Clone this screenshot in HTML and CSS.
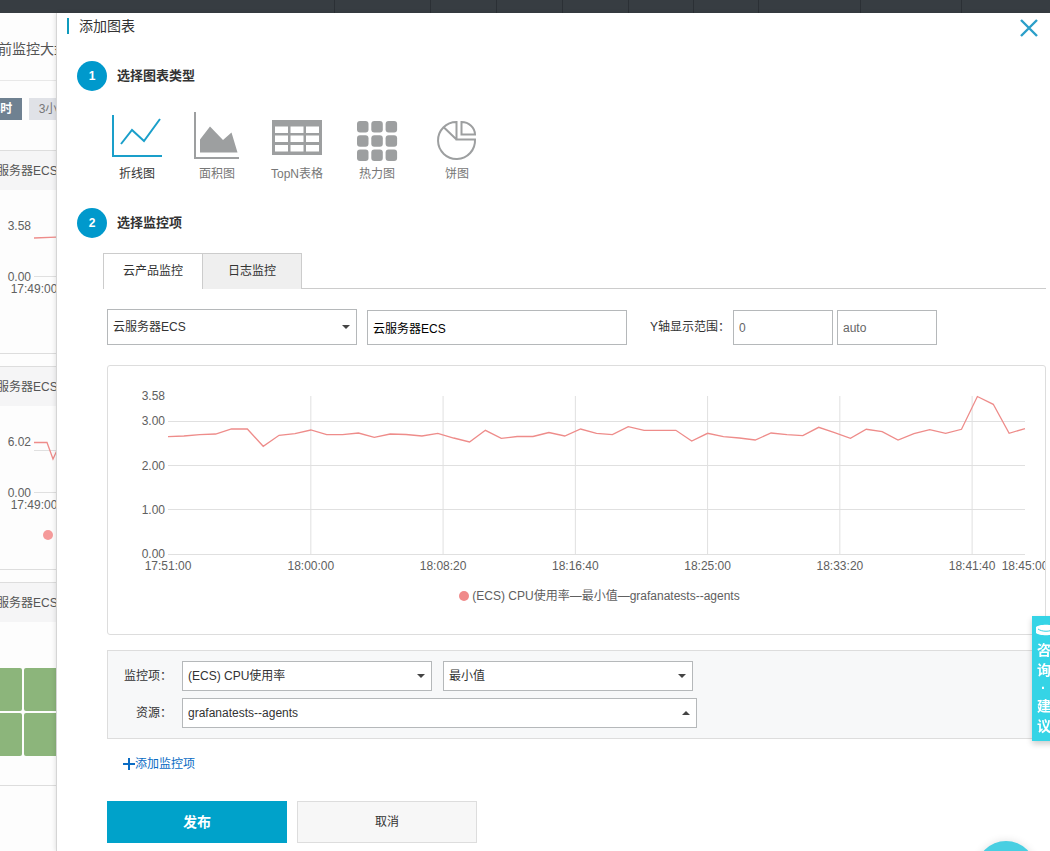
FILE: index.html
```html
<!DOCTYPE html>
<html lang="zh-CN">
<head>
<meta charset="utf-8">
<meta name="viewport" content="width=device-width, initial-scale=1">
<title>添加图表</title>
<link rel="stylesheet" href="styles.css">
</head>
<body>
<header class="topbar"><i></i><i></i><i></i><i></i><i></i><i></i><i></i><i></i><i></i></header>
<div class="layout">
  <section class="dashboard">
    <div class="dashboard-inner">
      <h2 class="dashboard-title">当前监控大盘</h2>
      <div class="ranges">
        <button class="range range-active" type="button">1小时</button>
        <button class="range" type="button">3小时</button>
      </div>
      <article class="card">
        <h3 class="card-title">云服务器ECS</h3>
        <svg class="card-chart" aria-hidden="true">
          <path class="grid-line" d="M63 86.5H300"/>
          <path class="series" d="M63 48L90 47H120"/>
          <text class="axis-text" x="60" y="40" text-anchor="end">3.58</text>
          <text class="axis-text" x="60" y="91" text-anchor="end">0.00</text>
          <text class="axis-text" x="63" y="103" text-anchor="middle">17:49:00</text>
        </svg>
      </article>
      <article class="card">
        <h3 class="card-title">云服务器ECS</h3>
        <svg class="card-chart" aria-hidden="true">
          <path class="grid-line" d="M63 44.5H300M63 86.5H300"/>
          <path class="series" d="M63 36.5H76L82 53L88 40"/>
          <text class="axis-text" x="60" y="40" text-anchor="end">6.02</text>
          <text class="axis-text" x="60" y="91" text-anchor="end">0.00</text>
          <text class="axis-text" x="63" y="103" text-anchor="middle">17:49:00</text>
          <circle class="dot" cx="77" cy="129" r="5"/>
        </svg>
      </article>
      <article class="card">
        <h3 class="card-title">云服务器ECS</h3>
        <div class="heat"><i></i><i></i><i></i><i></i></div>
      </article>
    </div>
  </section>

  <main class="drawer">
    <header class="drawer-head">
      <h1 class="drawer-title">添加图表</h1>
      <button class="close" type="button" aria-label="关闭">
        <svg width="20" height="20" viewBox="0 0 20 20"><path d="M2 2L18 18M18 2L2 18"/></svg>
      </button>
    </header>

    <div class="step"><span class="step-no">1</span><h2 class="step-title">选择图表类型</h2></div>
    <div class="types">
      <button class="type type-active" type="button">
        <svg class="type-icon" viewBox="0 0 52 50"><path class="stroke" d="M2 3V44H51M10 32L21 18L33 29L49 7"/></svg>
        折线图
      </button>
      <button class="type" type="button">
        <svg class="type-icon" viewBox="0 0 52 50"><path class="stroke" d="M4 0V46H48"/><path class="fill" d="M9 40.5V27.5L19 14.5L32 28L40.5 20.5L46.5 40.5Z"/></svg>
        面积图
      </button>
      <button class="type" type="button">
        <svg class="type-icon" viewBox="0 0 52 50"><path class="fill" fill-rule="evenodd" d="M1 8h50v35H1zM4 14.5v6.5h13v-6.5zM19.5 14.5v6.5h13v-6.5zM35 14.5v6.5h13v-6.5zM4 23.5v6.5h13v-6.5zM19.5 23.5v6.5h13v-6.5zM35 23.5v6.5h13v-6.5zM4 33v6.5h13v-6.5zM19.5 33v6.5h13v-6.5zM35 33v6.5h13v-6.5z"/></svg>
        TopN表格
      </button>
      <button class="type" type="button">
        <svg class="type-icon" viewBox="0 0 52 50"><g class="fill"><rect x="6" y="9" width="11.5" height="11.5" rx="3"/><rect x="20.3" y="9" width="11.5" height="11.5" rx="3"/><rect x="34.6" y="9" width="11.5" height="11.5" rx="3"/><rect x="6" y="23.3" width="11.5" height="11.5" rx="3"/><rect x="20.3" y="23.3" width="11.5" height="11.5" rx="3"/><rect x="34.6" y="23.3" width="11.5" height="11.5" rx="3"/><rect x="6" y="37.6" width="11.5" height="11.5" rx="3"/><rect x="20.3" y="37.6" width="11.5" height="11.5" rx="3"/><rect x="34.6" y="37.6" width="11.5" height="11.5" rx="3"/></g></svg>
        热力图
      </button>
      <button class="type" type="button">
        <svg class="type-icon" viewBox="0 0 52 50"><path class="stroke" d="M25.5 10V27.5H44A18.5 18.5 0 1 1 25.5 10ZM25.5 27.5L13 15.5M30.5 10A13.5 12.5 0 0 1 44 22.5H30.5Z"/></svg>
        饼图
      </button>
    </div>

    <div class="step"><span class="step-no">2</span><h2 class="step-title">选择监控项</h2></div>
    <div class="tabs" role="tablist">
      <button class="tab tab-active" type="button" role="tab" aria-selected="true">云产品监控</button>
      <button class="tab" type="button" role="tab" aria-selected="false">日志监控</button>
    </div>

    <div class="content">
      <div class="filters">
        <span class="select select-tall">
          <select aria-label="云产品"><option>云服务器ECS</option></select>
          <svg class="caret" viewBox="0 0 8 4"><path d="M0 0H8L4 4Z"/></svg>
        </span>
        <input class="input input-name" type="text" value="云服务器ECS" aria-label="图表名称">
        <label class="range-label" for="y-min">Y轴显示范围：</label>
        <span class="range-inputs">
          <input class="input input-num" id="y-min" type="text" placeholder="0">
          <input class="input input-num" type="text" placeholder="auto" aria-label="Y轴最大值">
        </span>
      </div>

      <figure class="chart">
        <svg class="plot" role="img" aria-label="CPU使用率">
          <svg width="100%" height="158" viewBox="0 0 54 158" preserveAspectRatio="none" overflow="visible">
            <path class="grid-line" d="M0 25.5H54M0 69.5H54M0 113.5H54M0 158.5H54M9 0V158M17.333 0V158M25.667 0V158M34 0V158M42.333 0V158M50.667 0V158"/>
            <polyline class="series" points="0,40.7 1,40 2,38.7 3,38 4,33 5,33 6,50.3 7,39.3 8,37.7 9,34 10,38.7 11,38.7 12,37 13,41.3 14,38 15,38.5 16,40 17,37.3 18,42 19,46 20,34.3 21,42.3 22,40.5 23,40.5 24,36.5 25,40 26,33 27,37.3 28,38.6 29,30.7 30,34.3 31,34.3 32,34.3 33,45 34,37.3 35,40.7 36,42 37,44 38,37 39,38.6 40,39.6 41,31.3 42,36.6 43,42.3 44,33.3 45,35.6 46,44 47,37.6 48,33.6 49,37.3 50,33.3 51,0.5 52,8.3 53,37.3 54,32.6"/>
          </svg>
          <g class="axis-text" text-anchor="end">
            <text x="-3" y="4">3.58</text><text x="-3" y="29">3.00</text><text x="-3" y="74">2.00</text><text x="-3" y="118">1.00</text><text x="-3" y="162">0.00</text>
          </g>
          <g class="axis-text" text-anchor="middle">
            <text x="0" y="174">17:51:00</text><text x="16.67%" y="174">18:00:00</text><text x="32.1%" y="174">18:08:20</text><text x="47.53%" y="174">18:16:40</text><text x="62.96%" y="174">18:25:00</text><text x="78.4%" y="174">18:33:20</text><text x="93.83%" y="174">18:41:40</text><text x="100%" y="174">18:45:00</text>
          </g>
        </svg>
        <figcaption class="legend"><span class="legend-dot"></span>(ECS) CPU使用率—最小值—grafanatests--agents</figcaption>
      </figure>

      <div class="metrics">
        <label class="metric-label" for="metric">监控项：</label>
        <div class="metric-row">
          <span class="select">
            <select id="metric"><option>(ECS) CPU使用率</option></select>
            <svg class="caret" viewBox="0 0 8 4"><path d="M0 0H8L4 4Z"/></svg>
          </span>
          <span class="select">
            <select aria-label="统计方式"><option>最小值</option></select>
            <svg class="caret" viewBox="0 0 8 4"><path d="M0 0H8L4 4Z"/></svg>
          </span>
        </div>
        <label class="metric-label" for="resource">资源：</label>
        <span class="select select-wide">
          <select id="resource"><option>grafanatests--agents</option></select>
          <svg class="caret" viewBox="0 0 8 4"><path d="M0 4H8L4 0Z"/></svg>
        </span>
      </div>

      <a class="add" href="#"><svg width="12" height="12" viewBox="0 0 12 12"><path d="M6 0V12M0 6H12"/></svg>添加监控项</a>

      <div class="actions">
        <button class="btn btn-primary" type="button">发布</button>
        <button class="btn" type="button">取消</button>
      </div>
    </div>
  </main>
</div>

<button class="feedback" type="button">
  <svg width="24" height="12" viewBox="0 0 24 12"><path d="M0 3C3 0 17 0 20 3V9C17 12 3 12 0 9Z" fill="#fff"/><path d="M2 5C6 8 14 8 18 5" fill="none" stroke="#35d4e6"/></svg>
  <span>咨</span><span>询</span><span class="feedback-dot">·</span><span>建</span><span>议</span>
</button>
<button class="bubble" type="button" aria-label="在线帮助"></button>
</body>
</html>
```
FILE: styles.css
```css
* { box-sizing: border-box; }

body {
  margin: 0;
  height: 100vh;
  display: flex;
  flex-direction: column;
  overflow: hidden;
  background: #fff;
  color: #333;
  font: 12px/18px "Liberation Sans", "Noto Sans CJK SC", sans-serif;
}

h1, h2, h3, figure { margin: 0; }
button, input, select { font: inherit; color: inherit; margin: 0; border-radius: 0; }
button { cursor: pointer; }

.topbar {
  flex: none;
  height: 13px;
  padding-left: 334px;
  display: grid;
  grid-template-columns: 96fr 66fr 66fr 66fr 65fr 65fr 102fr 101fr 89fr;
  background: #373d42;
}
.topbar i { border-left: 1px solid #2b3035; }

.layout { flex: 1; min-height: 0; display: flex; }

/* Dashboard strip left of the drawer */
.dashboard { flex: none; width: 56px; overflow: hidden; background: #fdfdfd; }
.dashboard-inner { width: 480px; margin-left: -30px; }
.dashboard-title {
  height: 68px;
  padding: 25px 0 0 14px;
  border-bottom: 1px solid #e8e8e8;
  color: #555;
  font-size: 14px;
  line-height: 22px;
  font-weight: 400;
}
.ranges { display: flex; gap: 7px; padding: 17px 0 30px 2px; }
.range {
  width: 50px;
  height: 22px;
  padding: 0;
  border: 0;
  background: #e0e2e7;
  color: #777;
}
.range-active { background: #6f8191; color: #fff; font-weight: 700; }
.card { margin-bottom: 12px; border: 1px solid #ddd; }
.card-title {
  height: 39px;
  padding: 0 14px;
  background: #f5f5f6;
  color: #555;
  font-size: 12px;
  line-height: 41px;
  font-weight: 400;
}
.card-chart { display: block; width: 100%; height: 163px; }
.dot { fill: #f59a9a; }
.heat {
  height: 163px;
  padding: 46px 0 0 7px;
  display: grid;
  grid-template-columns: 44px 44px;
  grid-auto-rows: 43px;
  gap: 2px;
}
.heat i { background: #8cb57b; border-radius: 2px; }

/* Drawer */
.drawer {
  position: relative;
  flex: 1;
  min-width: 0;
  padding: 3px 4px 0 10px;
  border-left: 1px solid #d5d5d5;
  box-shadow: -1px 0 4px rgba(0, 0, 0, .1);
  background: #fff;
}
.drawer-head { display: flex; justify-content: space-between; align-items: flex-start; height: 45px; padding: 2px 7px 0 0; }
.drawer-title {
  padding-left: 10px;
  border-left: 2px solid #0f9bbd;
  font-size: 14px;
  line-height: 16px;
  font-weight: 400;
}
.close { height: 20px; padding: 0; border: 0; background: none; }
.close svg { display: block; fill: none; stroke: #2b9fc9; stroke-width: 2.4; }

.step { display: flex; align-items: center; gap: 10px; padding-left: 10px; }
.step-no {
  width: 30px;
  height: 30px;
  border-radius: 50%;
  background: #0099cc;
  color: #fff;
  font-weight: 700;
  line-height: 30px;
  text-align: center;
}
.step-title { font-size: 13px; line-height: 20px; }

.types { display: flex; padding: 21px 0 25px 30px; }
.type {
  width: 80px;
  padding: 0;
  border: 0;
  background: none;
  color: #777;
  display: flex;
  flex-direction: column;
  align-items: center;
  gap: 3px;
  line-height: 18px;
}
.type-active { color: #333; }
.type-icon { width: 52px; height: 50px; color: #9d9fa0; }
.type-active .type-icon { color: #1a9fca; }
.stroke { fill: none; stroke: currentColor; stroke-width: 2; }
.fill { fill: currentColor; }

.tabs { display: flex; align-items: flex-start; margin: 15px 0 0 36px; border-bottom: 1px solid #ccc; }
.tab {
  width: 100px;
  height: 36px;
  margin-bottom: -1px;
  padding: 0 0 2px;
  border: 1px solid #ccc;
  border-bottom: 0;
  background: #efefef;
}
.tab + .tab { margin-left: -1px; }
.tab-active { background: #fff; }

.content { padding: 20px 0 0 40px; }

.filters { display: flex; align-items: flex-end; gap: 10px; }
.select { display: grid; align-items: center; width: 250px; height: 30px; }
.select select {
  grid-area: 1 / 1;
  width: 100%;
  height: 100%;
  padding: 0 20px 0 5px;
  border: 1px solid #b5b8ba;
  background: #fff;
  appearance: none;
}
.select-tall { height: 36px; }
.select-wide { width: 515px; }
.caret { grid-area: 1 / 1; justify-self: end; width: 8px; height: 4px; margin-right: 7px; fill: #444; pointer-events: none; }
.input { height: 35px; padding: 0 5px; border: 1px solid #b5b8ba; background: #fff; }
.input-name { width: 260px; color: #000; }
.input-num { width: 100px; }
.input::placeholder { color: #666; opacity: 1; }
.range-label { margin: 0 -7px 0 13px; line-height: 36px; }
.range-inputs { display: flex; gap: 4px; }

.chart {
  height: 270px;
  margin-top: 20px;
  padding-top: 30px;
  border: 1px solid #ddd;
  border-radius: 3px;
  overflow: hidden;
}
.plot { display: block; width: calc(100% - 80px); height: 191px; margin-left: 60px; overflow: visible; }
.grid-line { fill: none; stroke: #e0e0e0; stroke-width: 1; vector-effect: non-scaling-stroke; }
.series { fill: none; stroke: #ee8c8a; stroke-width: 1.3; vector-effect: non-scaling-stroke; }
.axis-text { fill: #606060; font-size: 12px; }
.legend {
  display: flex;
  justify-content: center;
  align-items: center;
  gap: 3px;
  padding: 0 14px 0 60px;
  color: #606060;
}
.legend-dot { width: 10px; height: 10px; border-radius: 50%; background: #f08a8a; }

.metrics {
  display: grid;
  grid-template-columns: 64px 1fr;
  gap: 7px 10px;
  align-items: center;
  margin-top: 15px;
  padding: 10px 0;
  border: 1px solid #ddd;
  background: #f7f8f9;
}
.metric-label { text-align: right; line-height: 28px; }
.metric-row { display: flex; gap: 11px; }

.add { display: flex; width: fit-content; align-items: center; margin: 16px 0 0 16px; color: #0b6cc4; text-decoration: none; }
.add svg { stroke: currentColor; stroke-width: 2; }

.actions { display: flex; gap: 10px; margin-top: 28px; }
.btn { width: 180px; height: 42px; padding: 0; border: 1px solid #ddd; background: #f7f7f7; }
.btn-primary { border-color: #00a2ca; background: #00a2ca; color: #fff; font-size: 14px; font-weight: 700; }

/* Floating helpers */
.feedback {
  position: fixed;
  right: -16px;
  top: 616px;
  width: 34px;
  height: 125px;
  padding: 8px 0 0 4px;
  border: 0;
  background: #35d4e6;
  box-shadow: 0 3px 6px rgba(0, 0, 0, .2);
  color: #fff;
  font-size: 14px;
  font-weight: 700;
  line-height: 20px;
  text-align: left;
  display: flex;
  flex-direction: column;
}
.feedback svg { flex: none; margin-bottom: 4px; }
.feedback span { padding-left: 1px; }
.feedback .feedback-dot { padding-left: 5px; line-height: 16px; }
.bubble {
  position: fixed;
  right: 14px;
  bottom: -50px;
  width: 60px;
  height: 60px;
  border: 0;
  border-radius: 50%;
  background: #48cfe2;
  box-shadow: 0 0 8px rgba(0, 0, 0, .12);
}
```
